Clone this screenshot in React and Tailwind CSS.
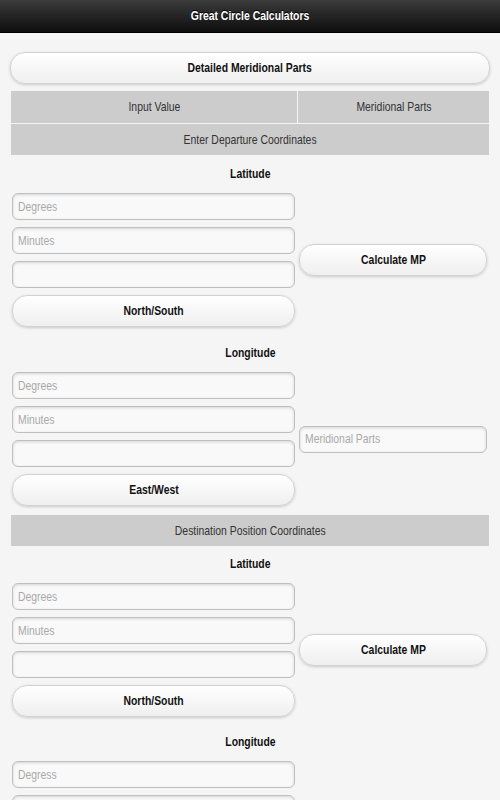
import React from "react";

const font = { fontFamily: '"Liberation Sans", Arial, sans-serif' };

function T({ children, left = false }) {
  return (
    <span className={"inline-block whitespace-nowrap scale-x-[0.8] " + (left ? "origin-left" : "origin-center")}>
      {children}
    </span>
  );
}

function Btn({ children, className = "" }) {
  return (
    <div
      className={
        "w-full h-[32px] rounded-[15px] border border-[#d2d2d2] bg-gradient-to-b from-[#ffffff] to-[#efefef] shadow-[0_1px_3px_rgba(0,0,0,0.18)] text-[13px] font-bold text-[#111] flex items-center justify-center " +
        className
      }
    >
      <T>{children}</T>
    </div>
  );
}

function Field({ placeholder = "" }) {
  return (
    <div className="w-full h-[27px] rounded-[6px] border border-[#bfbfbf] bg-[#f9f9f9] shadow-[inset_0_1px_3px_rgba(0,0,0,0.15)] px-[5px] text-[13px] text-[#a9a9a9] flex items-center">
      <T left>{placeholder}</T>
    </div>
  );
}

function Label({ children, className = "" }) {
  return (
    <div className={"h-[16px] flex items-center justify-center text-[13px] font-bold text-[#111] " + className}>
      <T>{children}</T>
    </div>
  );
}

function Block({ p1, p2, btn, right }) {
  return (
    <div className="flex mt-[11px]">
      <div className="w-[287px] pl-[1px] pr-[2px] flex flex-col gap-[7px]">
        <Field placeholder={p1} />
        <Field placeholder={p2} />
        <Field />
        <Btn>{btn}</Btn>
      </div>
      <div className="w-[192px] px-[2px] flex flex-col justify-center">{right}</div>
    </div>
  );
}

function Bar({ children, className = "" }) {
  return (
    <div className={"h-[31px] bg-[#cccccc] flex items-center justify-center text-[13px] text-[#333] " + className}>
      <T>{children}</T>
    </div>
  );
}

export default function App() {
  return (
    <div style={font} className="w-[500px] h-[800px] bg-[#f5f5f5] overflow-hidden">
      <div className="h-[33px] bg-gradient-to-b from-[#3c3c3c] to-[#0e0e0e] border-b border-black flex items-center justify-center text-white text-[13px] font-bold [text-shadow:0_-1px_0_#000]">
        <T>Great Circle Calculators</T>
      </div>
      <div className="px-[10px]">
        <Btn className="mt-[19px]">Detailed Meridional Parts</Btn>
        <div className="mt-[7px] mx-[1px]">
          <div className="flex gap-px">
            <Bar className="w-[286px] h-[32px]">Input Value</Bar>
            <Bar className="flex-1 h-[32px]">Meridional Parts</Bar>
          </div>
          <Bar className="mt-px">Enter Departure Coordinates</Bar>
          <Label className="mt-[11px]">Latitude</Label>
          <Block p1="Degrees" p2="Minutes" btn="North/South" right={<Btn>Calculate MP</Btn>} />
          <Label className="mt-[18px]">Longitude</Label>
          <Block p1="Degrees" p2="Minutes" btn="East/West" right={<Field placeholder="Meridional Parts" />} />
          <Bar className="mt-[9px]">Destination Position Coordinates</Bar>
          <Label className="mt-[10px]">Latitude</Label>
          <Block p1="Degrees" p2="Minutes" btn="North/South" right={<Btn>Calculate MP</Btn>} />
          <Label className="mt-[17px]">Longitude</Label>
          <Block p1="Degress" p2="Minutes" btn="East/West" right={<Field placeholder="Meridional Parts" />} />
        </div>
      </div>
    </div>
  );
}
